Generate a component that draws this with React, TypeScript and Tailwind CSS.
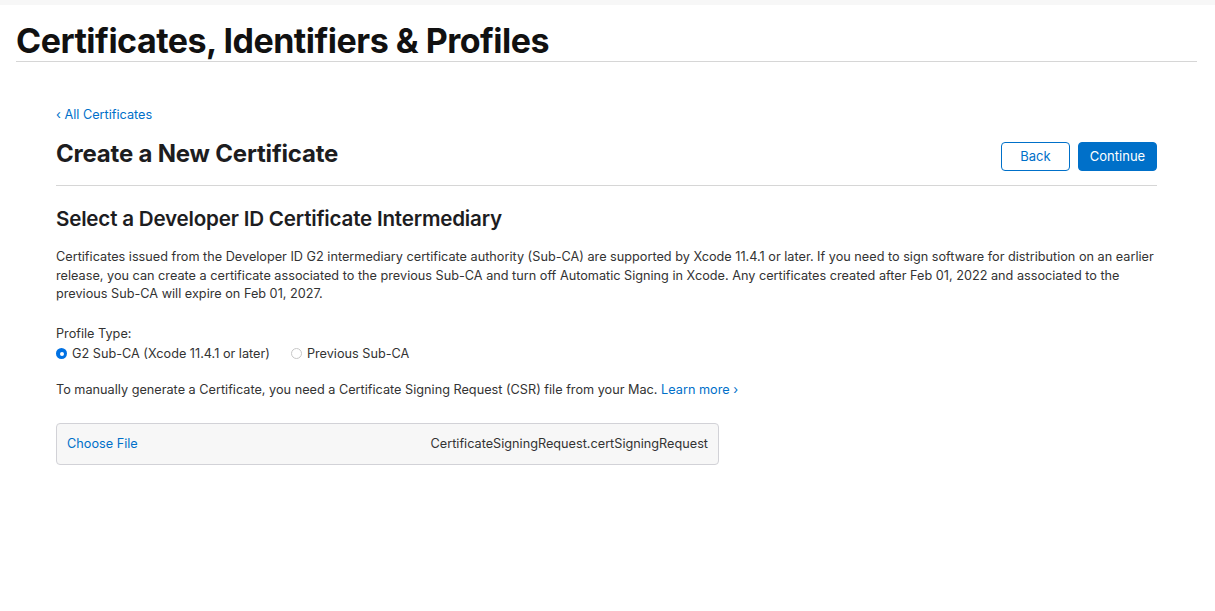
export default function App() {
  return (
    <div className="min-h-[611px] bg-white font-['Inter','Noto_Sans',sans-serif] text-[#1d1d1f]">
      <div className="h-[5px] bg-[#f7f7f7]" />
      <div className="pl-4 pr-[18px]">
        <header className="border-b border-[#d6d6d6] pt-[16px]">
          <h1 className="text-[34px] font-bold leading-[40px] tracking-[-0.5px] text-[#111]">
            Certificates, Identifiers &amp; Profiles
          </h1>
        </header>

        <main className="px-10 pt-[39px]">
          <a href="#" className="text-[12.7px] leading-[18px] text-[#0070c9]">
            ‹ All Certificates
          </a>

          <div className="mt-[11px] flex items-center justify-between border-b border-[#d6d6d6] pb-[14px]">
            <h2 className="text-[24px] font-bold leading-[30px] tracking-[-0.2px]">
              Create a New Certificate
            </h2>
            <div className="mt-[6px] flex gap-2">
              <button className="h-[29px] w-[69px] rounded-[4px] border border-[#0070c9] bg-white text-[13px] text-[#0070c9]">
                Back
              </button>
              <button className="h-[29px] w-[79px] rounded-[4px] border border-[#0070c9] bg-[#0070c9] text-[13px] text-white">
                Continue
              </button>
            </div>
          </div>

          <section className="pt-[20px]">
            <h3 className="text-[20.6px] font-semibold leading-[26px] tracking-[-0.2px]">
              Select a Developer ID Certificate Intermediary
            </h3>
            <p className="mt-[16px] text-[12.7px] leading-[18.5px] text-[#333]">
              Certificates issued from the Developer ID G2 intermediary certificate authority (Sub-CA) are supported by Xcode 11.4.1 or later. If you need to sign software for distribution on an earlier release, you can create a certificate associated to the previous Sub-CA and turn off Automatic Signing in Xcode. Any certificates created after Feb 01, 2022 and associated to the previous Sub-CA will expire on Feb 01, 2027.
            </p>

            <div className="mt-[21px] text-[12.7px] leading-[18px] text-[#333]">
              <div>Profile Type:</div>
              <div className="mt-[2px] flex items-center gap-[21px]">
                <label className="flex items-center gap-[5px]">
                  <span className="flex h-[11px] w-[11px] items-center justify-center rounded-full bg-[#0071e3]">
                    <span className="h-[4px] w-[4px] rounded-full bg-white" />
                  </span>
                  G2 Sub-CA (Xcode 11.4.1 or later)
                </label>
                <label className="flex items-center gap-[5px]">
                  <span className="h-[11px] w-[11px] rounded-full border border-[#c7c7c7] bg-white" />
                  Previous Sub-CA
                </label>
              </div>
            </div>

            <p className="mt-[18px] text-[12.7px] leading-[18px] text-[#333]">
              To manually generate a Certificate, you need a Certificate Signing Request (CSR) file from your Mac.{" "}
              <a href="#" className="text-[#0070c9]">
                Learn more ›
              </a>
            </p>

            <div className="mt-[24px] flex h-[42px] w-[663px] items-center justify-between rounded-[4px] border border-[#d2d2d7] bg-[#f7f7f7] px-[10px] text-[12.7px]">
              <a href="#" className="text-[#0070c9]">
                Choose File
              </a>
              <span className="text-[#333]">CertificateSigningRequest.certSigningRequest</span>
            </div>
          </section>
        </main>
      </div>
    </div>
  );
}
